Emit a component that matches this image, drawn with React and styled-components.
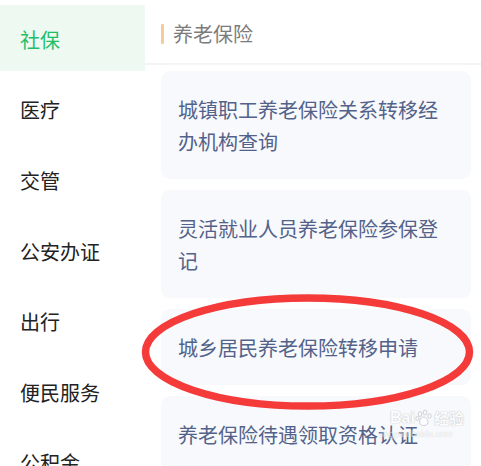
import React from "react";
import styled, { createGlobalStyle } from "styled-components";

const Global = createGlobalStyle`
  html, body { margin: 0; padding: 0; background: #ffffff; }
  body { width: 481px; height: 466px; overflow: hidden; font-family: "Noto Sans CJK SC", "Noto Sans", sans-serif; }
  * { box-sizing: border-box; }
`;

const Page = styled.div`
  position: relative;
  width: 481px;
  height: 466px;
  overflow: hidden;
  display: flex;
  background: #fff;
`;

const Sidebar = styled.nav`
  width: 145px;
  flex: none;
  display: flex;
  flex-direction: column;
  gap: 5.1px;
  padding-top: 5px;
`;

const NavItem = styled.div`
  height: 65.5px;
  flex: none;
  display: flex;
  align-items: center;
  padding: 4px 0 0 20px;
  font-size: 20px;
  line-height: 28px;
  color: ${(p) => (p.$active ? "#1fbf6a" : "#222222")};
  background: ${(p) => (p.$active ? "#eef9f2" : "transparent")};
`;

const Main = styled.section`
  flex: 1;
  display: flex;
  flex-direction: column;
`;

const Header = styled.header`
  height: 65px;
  flex: none;
  display: flex;
  align-items: center;
  gap: 9px;
  padding: 5px 0 0 16px;
  border-bottom: 2px solid #f4f4f4;
`;

const Accent = styled.span`
  width: 3px;
  height: 20px;
  background: #f7ca9a;
  border-radius: 1px;
`;

const Title = styled.h2`
  margin: 0;
  font-size: 20px;
  font-weight: 400;
  color: #7c7c7c;
  line-height: 28px;
`;

const List = styled.div`
  display: flex;
  flex-direction: column;
  gap: 11px;
  padding: 6px 10px 0 16px;
`;

const Card = styled.div`
  background: #f7f9fc;
  border-radius: 9px;
  padding: 23px 17px 21px 17px;
  font-size: 20px;
  line-height: 32px;
  color: #53628a;
`;

const Annotation = styled.svg`
  position: absolute;
  left: 0;
  top: 0;
  pointer-events: none;
`;

const Watermark = styled.div`
  position: absolute;
  left: 390px;
  top: 408px;
  display: flex;
  flex-direction: column;
  align-items: flex-start;
  pointer-events: none;
  opacity: 0.55;
`;

const MarkRow = styled.div`
  display: flex;
  align-items: center;
  font-family: "Liberation Sans", Arial, sans-serif;
  font-weight: 700;
  font-size: 16px;
  line-height: 20px;
  color: #ffffff;
  text-shadow: 0 0 1px #9a9a9a, 0 0 1px #9a9a9a;
`;

const MarkCn = styled.span`
  font-family: "Noto Sans CJK SC", sans-serif;
  font-size: 15px;
  font-weight: 700;
  margin-left: 1px;
`;

const MarkUrl = styled.div`
  font-family: "Liberation Sans", Arial, sans-serif;
  font-size: 9px;
  line-height: 12px;
  color: #ffffff;
  text-shadow: 0 0 1px #a0a0a0;
  margin-left: -10px;
`;

const nav = ["社保", "医疗", "交管", "公安办证", "出行", "便民服务", "公积金"];
const items = [
  "城镇职工养老保险关系转移经办机构查询",
  "灵活就业人员养老保险参保登记",
  "城乡居民养老保险转移申请",
  "养老保险待遇领取资格认证",
];

export default function App() {
  return (
    <Page>
      <Global />
      <Sidebar>
        {nav.map((n, i) => (
          <NavItem key={n} $active={i === 0}>
            {n}
          </NavItem>
        ))}
      </Sidebar>
      <Main>
        <Header>
          <Accent />
          <Title>养老保险</Title>
        </Header>
        <List>
          {items.map((t) => (
            <Card key={t}>{t}</Card>
          ))}
        </List>
      </Main>
      <Watermark>
        <MarkRow>
          <span>Bai</span>
          <svg width="18" height="18" viewBox="0 0 18 18">
            <g fill="#fff" stroke="#9a9a9a" strokeWidth="0.8">
              <ellipse cx="5" cy="5" rx="1.8" ry="2.4" />
              <ellipse cx="10" cy="3.5" rx="1.8" ry="2.4" />
              <ellipse cx="14.5" cy="7" rx="1.7" ry="2.2" />
              <ellipse cx="2.5" cy="9.5" rx="1.6" ry="2.1" />
              <path d="M8.5 8 C5 8 4 13 5 15 C6 17 11 17 12.5 15 C14 13 12 8 8.5 8 Z" />
            </g>
          </svg>
          <MarkCn>经验</MarkCn>
        </MarkRow>
        <MarkUrl>jingyan.baidu.com</MarkUrl>
      </Watermark>
      <Annotation width="481" height="466" viewBox="0 0 481 466">
        <ellipse
          cx="307.5"
          cy="352"
          rx="162"
          ry="54"
          fill="none"
          stroke="#f53a3a"
          strokeWidth="7.5"
        />
      </Annotation>
    </Page>
  );
}
